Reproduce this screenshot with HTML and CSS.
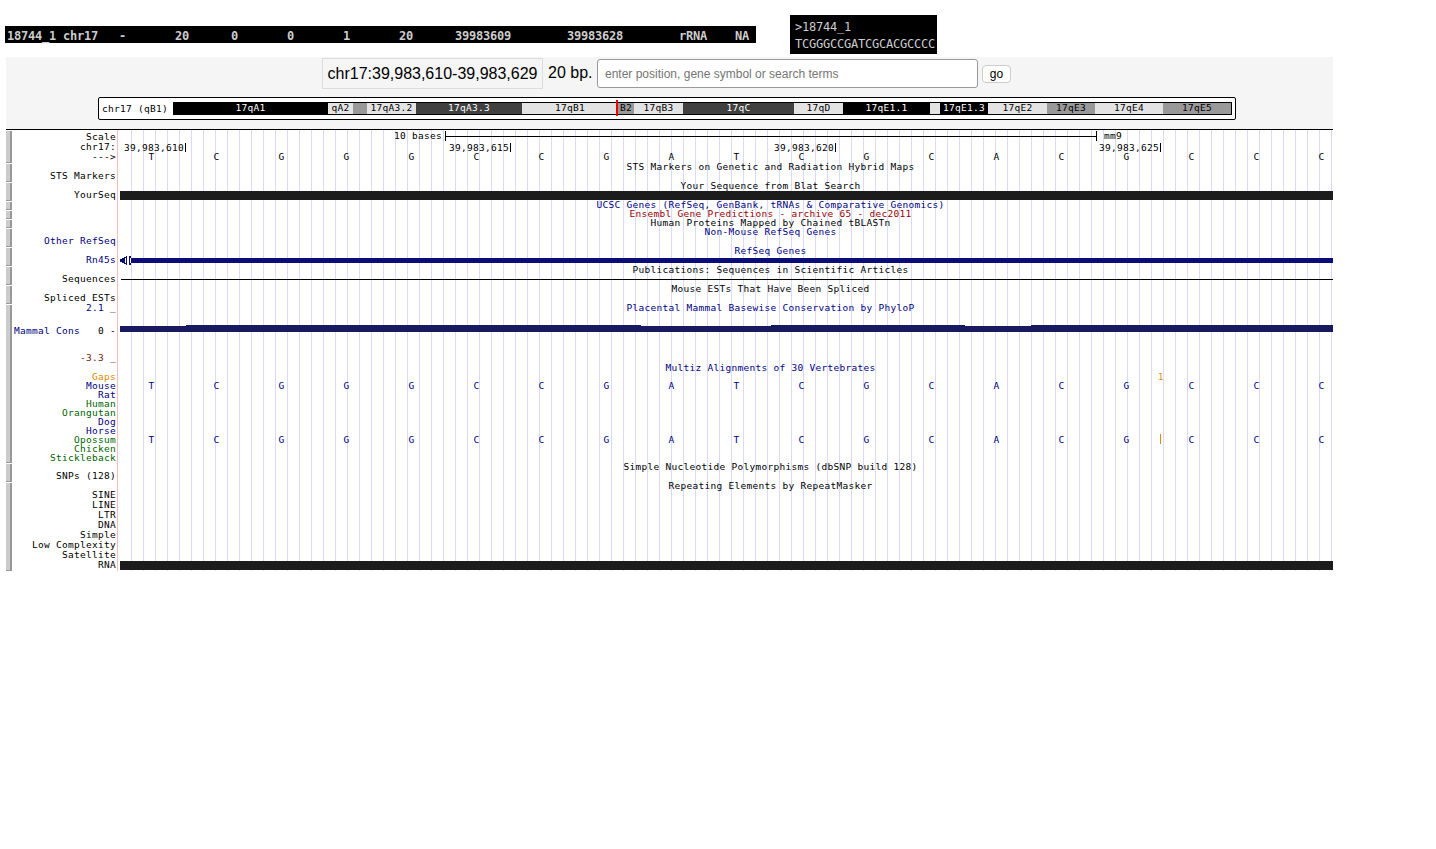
FILE: index.html
```html
<!DOCTYPE html>
<html>
<head>
	<meta charset="utf-8">
	<title>UCSC Genome Browser</title>
	<link rel="stylesheet" href="styles.css">
</head>
<body>
<div class="top">
	<pre class="blat">18744_1 chr17	-	20	0	0	1	20	39983609	39983628	rRNA	NA </pre>
	<pre class="fasta">&gt;18744_1
TCGGGCCGATCGCACGCCCC</pre>
</div>

<div class="panel">
	<div class="search">
		<div class="position">chr17:39,983,610-39,983,629</div>
		<div class="size">20 bp.</div>
		<input class="term" type="text" placeholder="enter position, gene symbol or search terms">
		<button class="go">go</button>
	</div>
	<div class="ideogram">
		<div class="ideo-name">chr17 (qB1)</div>
		<div class="bands">
			<div class="band black" style="width:155px">17qA1</div>
			<div class="band light" style="width:25px">qA2</div>
			<div class="band gray" style="width:14px"></div>
			<div class="band light" style="width:49px">17qA3.2</div>
			<div class="band dark" style="width:106px">17qA3.3</div>
			<div class="band light" style="width:96px">17qB1</div>
			<div class="band gray" style="width:16px">B2</div>
			<div class="band light" style="width:49px">17qB3</div>
			<div class="band dark" style="width:111px">17qC</div>
			<div class="band light" style="width:49px">17qD</div>
			<div class="band black" style="width:87px">17qE1.1</div>
			<div class="band light" style="width:10px"></div>
			<div class="band black" style="width:48px">17qE1.3</div>
			<div class="band light" style="width:59px">17qE2</div>
			<div class="band gray" style="width:48px">17qE3</div>
			<div class="band light" style="width:68px">17qE4</div>
			<div class="band gray" style="width:68px">17qE5</div>
			<div class="marker"></div>
		</div>
	</div>
</div>

<div class="browser">
	<div class="side">
		<div class="btn" style="height:32px"></div>
		<div class="btn" style="height:18px"></div>
		<div class="btn" style="height:18px"></div>
		<div class="btn" style="height:8px"></div>
		<div class="btn" style="height:8px"></div>
		<div class="btn" style="height:8px"></div>
		<div class="btn" style="height:18px"></div>
		<div class="btn" style="height:18px"></div>
		<div class="btn" style="height:18px"></div>
		<div class="btn" style="height:18px"></div>
		<div class="btn" style="height:158px"></div>
		<div class="btn" style="height:18px"></div>
		<div class="btn" style="height:88px"></div>
	</div>
	<div class="rows">
		<div class="row scale-row"><div class="label">Scale</div><div class="lane scale"><span>10 bases</span><i class="ruler"></i><span>mm9</span></div></div>
		<div class="row h10 up"><div class="label">chr17:</div><div class="lane ticks"><span>39,983,610</span><span>39,983,615</span><span>39,983,620</span><span>39,983,625</span></div></div>
		<div class="row h10 up"><div class="label">---&gt;</div><div class="lane bases black-text"><span>T</span><span>C</span><span>G</span><span>G</span><span>G</span><span>C</span><span>C</span><span>G</span><span>A</span><span>T</span><span>C</span><span>G</span><span>C</span><span>A</span><span>C</span><span>G</span><span>C</span><span>C</span><span>C</span></div></div>

		<div class="row h9 up"><div class="label"></div><div class="lane title">STS Markers on Genetic and Radiation Hybrid Maps</div></div>
		<div class="row h10 up"><div class="label">STS Markers</div><div class="lane"></div></div>
		<div class="row h9 up"><div class="label"></div><div class="lane title">Your Sequence from Blat Search</div></div>
		<div class="row h9 up"><div class="label">YourSeq</div><div class="lane"><div class="bar"></div></div></div>

		<div class="row h9"><div class="label"></div><div class="lane title navy">UCSC Genes (RefSeq, GenBank, tRNAs &amp; Comparative Genomics)</div></div>
		<div class="row h9"><div class="label"></div><div class="lane title red">Ensembl Gene Predictions - archive 65 - dec2011</div></div>
		<div class="row h9"><div class="label"></div><div class="lane title">Human Proteins Mapped by Chained tBLASTn</div></div>
		<div class="row h9"><div class="label"></div><div class="lane title navy">Non-Mouse RefSeq Genes</div></div>
		<div class="row h10"><div class="label navy">Other RefSeq</div><div class="lane"></div></div>
		<div class="row h10"><div class="label"></div><div class="lane title navy">RefSeq Genes</div></div>
		<div class="row h9 up"><div class="label navy">Rn45s</div><div class="lane"><div class="gene">
			<svg class="arrow" width="11" height="9" viewBox="0 0 11 9"><path fill="#0c0c78" d="M0 3h2V2h2V1h2V0h1v9H6V8H4V7H2V6H0z"/><path fill="#fff" d="M5 2h1v5H5z"/><path fill="#0c0c78" d="M9 0h2v2h-1v5h1v2H9z"/></svg>
		</div></div></div>
		<div class="row h9"><div class="label"></div><div class="lane title">Publications: Sequences in Scientific Articles</div></div>
		<div class="row h10"><div class="label">Sequences</div><div class="lane"><div class="seqline"></div></div></div>
		<div class="row h10"><div class="label"></div><div class="lane title">Mouse ESTs That Have Been Spliced</div></div>
		<div class="row h9 up"><div class="label">Spliced ESTs</div><div class="lane"></div></div>
		<div class="row h10"><div class="label navy">2.1 _</div><div class="lane title navy">Placental Mammal Basewise Conservation by PhyloP</div></div>
		<div class="row h41">
			<div class="label split"><span class="navy">Mammal Cons</span><span>0 -</span></div>
			<div class="lane"><div class="wiggle">
				<div class="cons low" style="width:66px"></div>
				<div class="cons" style="width:455px"></div>
				<div class="cons low" style="width:130px"></div>
				<div class="cons" style="width:194px"></div>
				<div class="cons low" style="width:66px"></div>
				<div class="cons" style="width:302px"></div>
			</div></div>
		</div>
		<div class="row h9 up"><div class="label"><span class="maroon">-3.3</span> _</div><div class="lane"></div></div>
		<div class="row h10"><div class="label"></div><div class="lane title navy">Multiz Alignments of 30 Vertebrates</div></div>
		<div class="row h9 up"><div class="label orange">Gaps</div><div class="lane"><span class="gapcount">1</span></div></div>
		<div class="row h9 up"><div class="label navy">Mouse</div><div class="lane bases"><span>T</span><span>C</span><span>G</span><span>G</span><span>G</span><span>C</span><span>C</span><span>G</span><span>A</span><span>T</span><span>C</span><span>G</span><span>C</span><span>A</span><span>C</span><span>G</span><span>C</span><span>C</span><span>C</span></div></div>
		<div class="row h9 up"><div class="label navy">Rat</div><div class="lane"></div></div>
		<div class="row h9 up"><div class="label green">Human</div><div class="lane"></div></div>
		<div class="row h9 up"><div class="label green">Orangutan</div><div class="lane"></div></div>
		<div class="row h9 up"><div class="label navy">Dog</div><div class="lane"></div></div>
		<div class="row h9 up"><div class="label navy">Horse</div><div class="lane"></div></div>
		<div class="row h9 up"><div class="label green">Opossum</div><div class="lane bases"><span>T</span><span>C</span><span>G</span><span>G</span><span>G</span><span>C</span><span>C</span><span>G</span><span>A</span><span>T</span><span>C</span><span>G</span><span>C</span><span>A</span><span>C</span><span>G</span><span>C</span><span>C</span><span>C</span><i class="gapbar"></i></div></div>
		<div class="row h9 up"><div class="label green">Chicken</div><div class="lane"></div></div>
		<div class="row h9 up"><div class="label green">Stickleback</div><div class="lane"></div></div>
		<div class="row h9 up"><div class="label"></div><div class="lane title">Simple Nucleotide Polymorphisms (dbSNP build 128)</div></div>
		<div class="row h10 up"><div class="label">SNPs (128)</div><div class="lane"></div></div>
		<div class="row h9 up"><div class="label"></div><div class="lane title">Repeating Elements by RepeatMasker</div></div>
		<div class="row h10 up"><div class="label">SINE</div><div class="lane"></div></div>
		<div class="row h10 up"><div class="label">LINE</div><div class="lane"></div></div>
		<div class="row h10 up"><div class="label">LTR</div><div class="lane"></div></div>
		<div class="row h10 up"><div class="label">DNA</div><div class="lane"></div></div>
		<div class="row h10 up"><div class="label">Simple</div><div class="lane"></div></div>
		<div class="row h10 up"><div class="label">Low Complexity</div><div class="lane"></div></div>
		<div class="row h10 up"><div class="label">Satellite</div><div class="lane"></div></div>
		<div class="row h10 up"><div class="label">RNA</div><div class="lane"><div class="bar"></div></div></div>
	</div>
</div>
</body>
</html>
```
FILE: styles.css
```css
body {
	margin: 0;
	background-color: #fff;
	color: #000;
	font-family: "Liberation Sans", Arial, sans-serif;
}

pre {
	margin: 0;
	font-family: "DejaVu Sans Mono", monospace;
	font-size: 12px;
	letter-spacing: -0.224px;
	color: #ccc;
	background-color: #000;
	tab-size: 8;
}

.top {
	display: flex;
	align-items: flex-start;
	height: 57px;
	padding: 15px 0 0 5px;
	box-sizing: border-box;
}

.blat {
	width: 749px;
	height: 17px;
	margin-top: 11px;
	padding-left: 2px;
	line-height: 20px;
	font-weight: bold;
}

.fasta {
	width: 142px;
	height: 35px;
	margin-left: 34px;
	padding: 4px 0 0 5px;
	line-height: 17px;
}

.panel {
	width: 1327px;
	height: 72px;
	margin-left: 6px;
	background-color: #f5f5f5;
	border-bottom: 1px solid #000;
}

.search {
	display: flex;
	align-items: flex-start;
	height: 40px;
	padding: 1px 0 0 316px;
	box-sizing: border-box;
}

.position {
	width: 219px;
	height: 29px;
	border: 1px solid #ddd;
	text-align: center;
	font-size: 16px;
	line-height: 29px;
}

.size {
	width: 49px;
	margin-left: 5px;
	font-size: 16px;
	line-height: 30px;
}

.term {
	width: 381px;
	height: 29px;
	margin: 1px 0 0 0;
	padding: 0 7px;
	box-sizing: border-box;
	border: 1px solid #999;
	border-radius: 3px;
	background-color: #fff;
	font-family: "Liberation Sans", Arial, sans-serif;
	font-size: 12px;
	outline: none;
}

.term::placeholder {
	color: #757575;
	opacity: 1;
}

.go {
	width: 29px;
	height: 18px;
	margin: 7px 0 0 4px;
	padding: 0;
	border: 1px solid #ccc;
	border-radius: 4px;
	background-color: #fff;
	color: #000;
	font-family: "Liberation Sans", Arial, sans-serif;
	font-size: 12px;
	line-height: 16px;
}

.ideogram {
	display: flex;
	align-items: center;
	width: 1138px;
	height: 23px;
	margin-left: 92px;
	box-sizing: border-box;
	border: 1px solid #000;
	border-radius: 2px;
	background-color: #fff;
	font-family: "DejaVu Sans Mono", monospace;
	font-size: 9.5px;
	letter-spacing: 0.28px;
}

.ideo-name {
	width: 74px;
	padding-left: 3px;
	box-sizing: border-box;
	white-space: nowrap;
}

.bands {
	position: relative;
	display: flex;
	height: 11px;
	border: 1px solid #000;
	border-width: 1px 1px 1px 0;
}

.band {
	height: 100%;
	text-align: center;
	line-height: 10px;
	white-space: nowrap;
	overflow: hidden;
}

.black { background-color: #000; color: #fff; }
.dark { background-color: #404040; color: #fff; }
.gray { background-color: #999; color: #000; }
.light { background-color: #e3e3e3; color: #000; }

.marker {
	position: absolute;
	left: 443px;
	top: -3px;
	width: 2px;
	height: 16px;
	background-color: #e00;
}

.browser {
	display: flex;
	width: 1327px;
	margin-left: 6px;
	font-family: "DejaVu Sans Mono", monospace;
	font-size: 9.5px;
	letter-spacing: 0.28px;
}

.side {
	display: flex;
	flex-direction: column;
	gap: 1px;
	width: 6px;
	padding-top: 1px;
}

.btn {
	flex: none;
	box-sizing: border-box;
	background-color: #ccc;
	border-right: 2px solid #999;
	border-bottom: 1px solid #999;
}

.rows {
	flex: 1;
}

.row {
	display: grid;
	grid-template-columns: 108px 1213px;
}

.h9 { height: 9px; line-height: 9px; }
.h10 { height: 10px; line-height: 10px; }
.h41 { height: 41px; line-height: 35px; }

/* text one pixel higher than the row's middle */
.h9.up { line-height: 7px; }
.h10.up { line-height: 8px; }

.scale-row {
	height: 10px;
	padding-top: 3px;
	line-height: 8px;
}

.label {
	position: relative;
	width: 105px;
	padding-right: 1px;
	box-sizing: border-box;
	white-space: pre;
	text-align: right;
}

.label::after {
	content: "";
	position: absolute;
	top: 0;
	bottom: 0;
	right: -1px;
	width: 1px;
	background-color: #f9bcbc;
}

.scale-row .label::after {
	top: -3px;
}

.split {
	display: flex;
	justify-content: space-between;
	padding-left: 2px;
}

.lane {
	position: relative;
	white-space: nowrap;
	background-image: linear-gradient(90deg, transparent 11px, #dadaf6 11px, #dadaf6 12px);
	background-size: 12px 100%;
}

.scale-row .lane {
	margin-top: -3px;
}

.title {
	padding-left: 88px;
	text-align: center;
}

.navy { color: #00007e; }
.red { color: #990000; }
.maroon { color: #6e1a1a; }
.orange { color: #e08a00; }
.green { color: #006400; }

.bar {
	height: 9px;
	background-color: #1c1c1c;
}

.gene {
	position: relative;
	height: 5px;
	margin: 2px 0 0 8px;
	background-color: #0c0c78;
}

.arrow {
	position: absolute;
	left: -8px;
	top: -2px;
	background-color: #fff;
}

.seqline {
	height: 1px;
	margin: 5px 0 0 1px;
	background-color: #000;
}

.wiggle {
	display: flex;
	align-items: flex-end;
	height: 7px;
	padding-top: 12px;
}

.cons {
	height: 7px;
	flex: none;
	background-color: #191960;
}

.cons.low {
	height: 6px;
}

.scale {
	display: flex;
	align-items: center;
	padding: 0 0 2px 274px;
	line-height: 10px;
}

.ruler {
	width: 650px;
	height: 10px;
	margin: 0 7px 0 3px;
	border: solid #000;
	border-width: 0 1px;
	background: linear-gradient(#000, #000) 0 5px / 100% 1px no-repeat;
}

.ticks {
	display: grid;
	grid-template-columns: 66px repeat(3, 325px);
}

.ticks span {
	height: 9px;
	padding-right: 1px;
	border-right: 1px solid #000;
	direction: rtl;
	unicode-bidi: plaintext;
	text-align: right;
	line-height: 10px;
}

.bases {
	display: flex;
}

.bases span {
	flex: none;
	width: 65px;
	text-align: center;
	color: #00007e;
}

.bases span:first-child {
	margin-left: -1px;
}

.black-text span {
	color: #000;
	line-height: 8px;
}

.gapcount {
	position: absolute;
	left: 1038px;
	top: 0;
	color: #e08a00;
	font-size: 9px;
	line-height: 9px;
}

.gapbar {
	position: absolute;
	left: 1040px;
	top: -2px;
	width: 1px;
	height: 10px;
	background-color: #e08a00;
}
```
